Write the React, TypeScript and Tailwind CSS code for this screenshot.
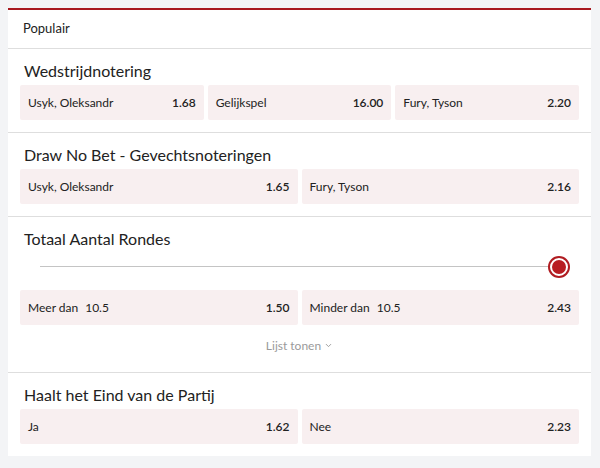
import { ChevronDown } from "lucide-react";

type Odd = { label: string; line?: string; price: string };

const markets: { title: string; odds: Odd[]; slider?: boolean }[] = [
    {
        title: "Wedstrijdnotering",
        odds: [
            { label: "Usyk, Oleksandr", price: "1.68" },
            { label: "Gelijkspel", price: "16.00" },
            { label: "Fury, Tyson", price: "2.20" },
        ],
    },
    {
        title: "Draw No Bet - Gevechtsnoteringen",
        odds: [
            { label: "Usyk, Oleksandr", price: "1.65" },
            { label: "Fury, Tyson", price: "2.16" },
        ],
    },
    {
        title: "Totaal Aantal Rondes",
        slider: true,
        odds: [
            { label: "Meer dan", line: "10.5", price: "1.50" },
            { label: "Minder dan", line: "10.5", price: "2.43" },
        ],
    },
    {
        title: "Haalt het Eind van de Partij",
        odds: [
            { label: "Ja", price: "1.62" },
            { label: "Nee", price: "2.23" },
        ],
    },
];

function OddButton({ odd }: { odd: Odd }) {
    return (
        <button
            type="button"
            className="flex-1 h-[35px] flex items-center justify-between px-2 bg-[#f8eff0] rounded-[2px] text-[12px] text-[#222] cursor-pointer hover:bg-[#f2e4e5]"
        >
            <span>
                {odd.label}
                {odd.line && <span className="ml-[7px]">{odd.line}</span>}
            </span>
            <span className="font-semibold">{odd.price}</span>
        </button>
    );
}

function App() {
    return (
        <div className="min-h-[468px] bg-[#f3f4f6] pt-2 pl-2 pr-[9px] pb-2 font-['Lato','Noto_Sans',sans-serif]">
            <div className="bg-white border-t-2 border-[#a8191f]">
                <div className="h-[39px] px-[15px] flex items-center text-[13px] text-[#222] border-b border-[#dedede]">
                    Populair
                </div>

                {markets.map((m, i) => (
                    <div
                        key={m.title}
                        className={`px-3 pt-[10px] pb-3 ${i < markets.length - 1 ? "border-b border-[#dedede]" : ""}`}
                    >
                        <h2 className="h-6 flex items-center px-1 text-[16px] text-[#222] mb-[2px]">
                            {m.title}
                        </h2>

                        {m.slider && (
                            <div className="h-[37px] flex items-start pt-[3px] pl-5 pr-[9px]">
                                <div className="flex-1 h-px bg-[#c4c4c4] mt-[10px]" />
                                <div className="w-[22px] h-[22px] rounded-full border-2 border-[#b01c21] bg-white flex items-center justify-center">
                                    <div className="w-[14px] h-[14px] rounded-full bg-[#b81d22]" />
                                </div>
                            </div>
                        )}

                        <div className="flex gap-1">
                            {m.odds.map((o) => (
                                <OddButton key={o.label} odd={o} />
                            ))}
                        </div>

                        {m.slider && (
                            <div className="h-[37px] flex items-center justify-center gap-[3px] text-[12px] text-[#9a9a9a] mt-[2px] -mb-1">
                                Lijst tonen
                                <ChevronDown size={9} strokeWidth={2.5} />
                            </div>
                        )}
                    </div>
                ))}
            </div>
        </div>
    );
}

export default App;
